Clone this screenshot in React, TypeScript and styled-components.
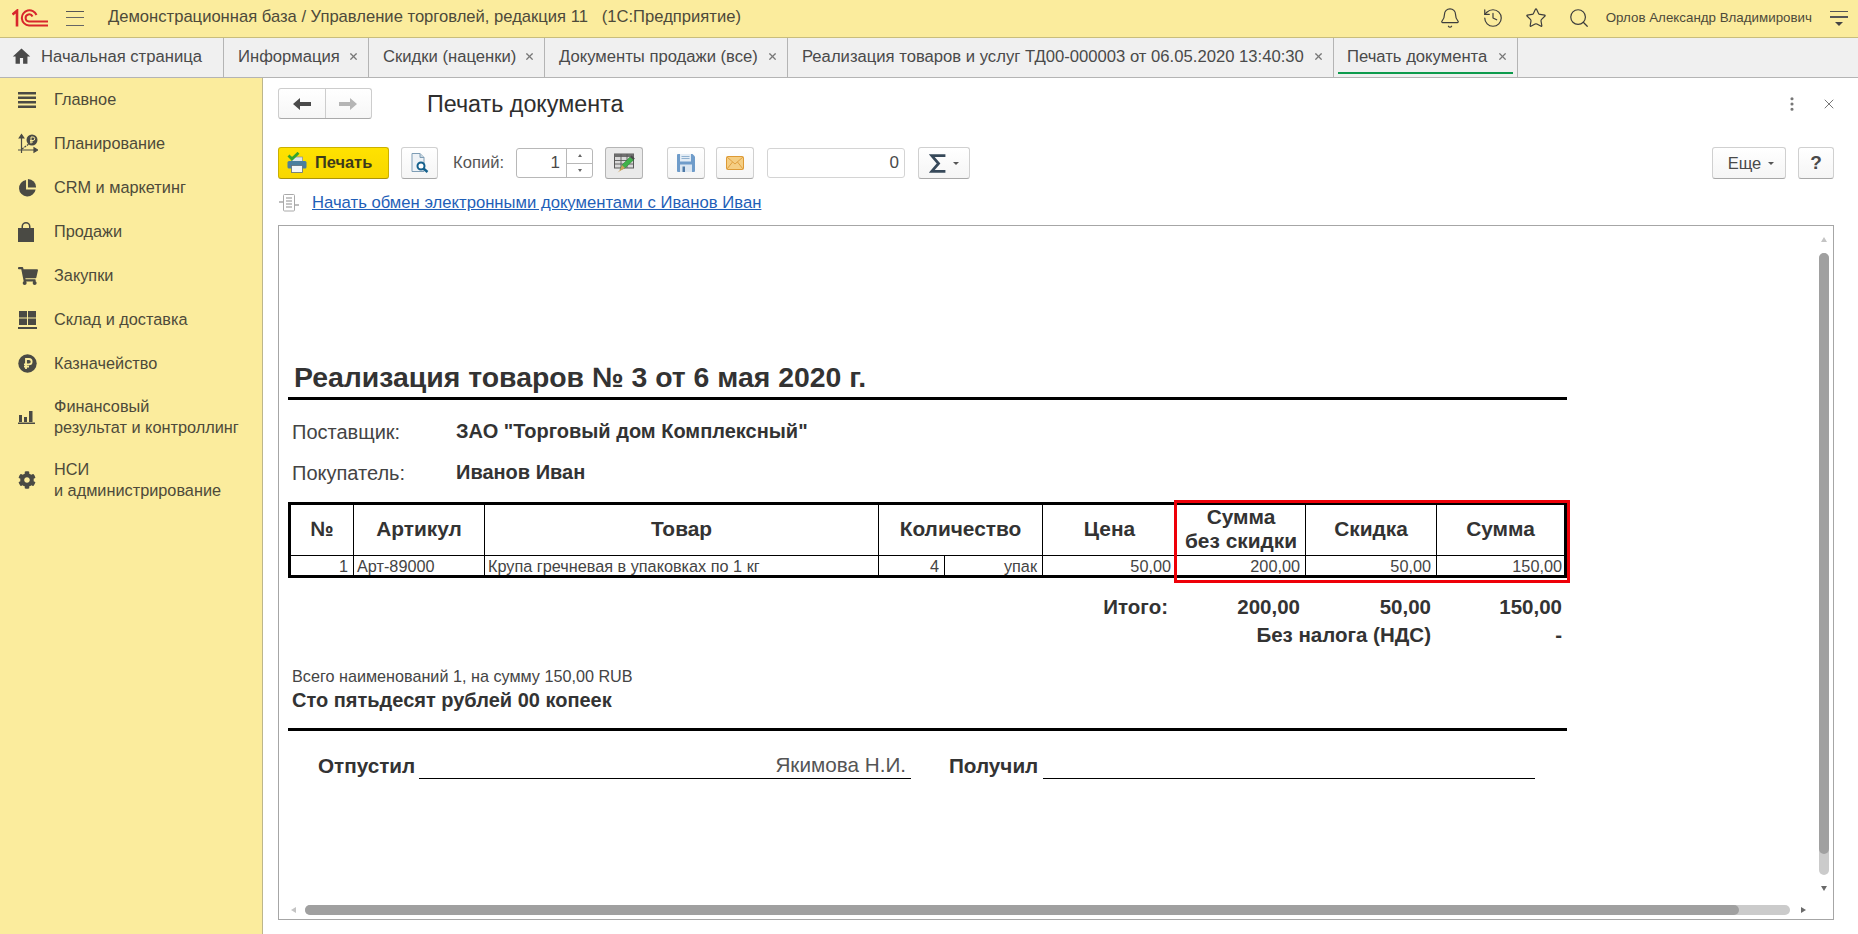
import React from 'react';
import styled, { createGlobalStyle } from 'styled-components';
import { Bell, History, Star, Search, X, MoreVertical } from 'lucide-react';
import { FaCog, FaShoppingCart } from 'react-icons/fa';

const GlobalStyle = createGlobalStyle`
  html, body {
    margin: 0;
    padding: 0;
    background: #fff;
  }
  body {
    font-family: "Liberation Sans", Arial, sans-serif;
    color: #4a4a4a;
  }
  * {
    box-sizing: border-box;
  }
`;

const Page = styled.div`
  width: 1858px;
  height: 934px;
  display: flex;
  flex-direction: column;
  overflow: hidden;
`;

const TopBar = styled.header`
  height: 38px;
  flex: none;
  display: flex;
  align-items: center;
  padding: 0 10px 1px 12px;
  background: #fbec9d;
  border-bottom: 1px solid #c9bd7c;
`;

const Burger = styled.div`
  width: 18px;
  height: 15px;
  margin-left: 18px;
  border-top: 1.5px solid #555;
  border-bottom: 1.5px solid #666;
  position: relative;

  &::after {
    content: '';
    position: absolute;
    left: 0;
    right: 0;
    top: 5px;
    height: 1.5px;
    background: #666;
  }
`;

const AppTitle = styled.div`
  margin-left: 24px;
  padding-bottom: 2px;
  font-size: 16.6px;
  white-space: pre;
  color: #4d4a3a;
`;

const TopActions = styled.div`
  margin-left: auto;
  display: flex;
  align-items: center;
  gap: 21px;
  color: #3d3d3d;
`;

const UserName = styled.div`
  margin-left: 16px;
  padding-bottom: 2px;
  font-size: 13.35px;
  color: #4d4a3a;
`;

const UserMenu = styled.div`
  width: 18px;
  margin-left: 18px;
  display: flex;
  flex-direction: column;
  align-items: stretch;
  gap: 4px;

  i {
    display: block;
    height: 1.5px;
    background: #555;
  }
  b {
    display: block;
    width: 0;
    height: 0;
    align-self: center;
    border-left: 4px solid transparent;
    border-right: 4px solid transparent;
    border-top: 4px solid #444;
  }
`;

const TabBar = styled.nav`
  height: 40px;
  flex: none;
  display: flex;
  background: #f0f0f0;
  border-bottom: 1px solid #b4b4b4;
`;

const Tab = styled.div<{ $width: number; $active?: boolean }>`
  width: ${p => p.$width}px;
  flex: none;
  position: relative;
  display: flex;
  align-items: center;
  justify-content: space-between;
  padding: 0 9px 2px ${p => (p.$active ? 13 : 14)}px;
  border-right: 1px solid #b4b4b4;
  font-size: 16.65px;
  color: #4a4a4a;
  white-space: nowrap;

  ${p => p.$active && `
    &::after {
      content: '';
      position: absolute;
      left: 4px;
      right: 4px;
      bottom: 3px;
      height: 2px;
      background: #0d9b4d;
    }
  `}
`;

const HomeTabLabel = styled.span`
  display: flex;
  align-items: center;
  gap: 10px;
  margin-left: -2px;
`;

const Body = styled.div`
  flex: 1;
  display: flex;
  min-height: 0;
`;

const Sidebar = styled.aside`
  width: 263px;
  flex: none;
  background: #fbec9d;
  border-right: 1px solid #bdb68c;
`;

const SideItem = styled.div<{ $tall?: boolean }>`
  height: ${p => (p.$tall ? 63 : 44)}px;
  display: flex;
  align-items: center;
  padding: 0 0 1px 18px;
  font-size: 16.3px;
  line-height: 21px;
  color: #4d4a3a;
`;

const SideIcon = styled.span`
  width: 36px;
  flex: none;
  display: flex;
  color: #4a4a44;
`;

const Main = styled.main`
  flex: 1;
  min-width: 0;
  display: flex;
  flex-direction: column;
  padding: 10px 24px 14px 15px;
`;

const FormHeader = styled.div`
  height: 31px;
  flex: none;
  display: flex;
  align-items: center;
`;

const NavGroup = styled.div`
  width: 94px;
  height: 31px;
  display: flex;
  background: linear-gradient(#fff, #f6f6f6);
  border: 1px solid #cdcdcd;
  border-bottom-color: #aaa;
  border-radius: 3px;
`;

const NavPart = styled.div<{ $color: string; $divider?: boolean }>`
  flex: 1;
  display: flex;
  align-items: center;
  justify-content: center;
  color: ${p => p.$color};
  ${p => p.$divider && 'border-right: 1px solid #cdcdcd;'}
`;

const FormTitle = styled.h1`
  margin: 1px 0 0 55px;
  font-size: 23.3px;
  font-weight: 400;
  color: #2e2e2e;
`;

const FormActions = styled.div`
  margin-left: auto;
  margin-right: -3px;
  display: flex;
  align-items: center;
  gap: 20px;
  color: #777;
`;

const ToolBar = styled.div`
  height: 32px;
  margin-top: 28px;
  flex: none;
  display: flex;
  align-items: center;
`;

const ToolButton = styled.div<{ $width: number; $gap?: number; $pressed?: boolean }>`
  width: ${p => p.$width}px;
  height: 32px;
  flex: none;
  margin-left: ${p => p.$gap ?? 0}px;
  display: flex;
  align-items: center;
  justify-content: center;
  gap: 7px;
  font-size: 16.5px;
  color: #4a4a4a;
  border-radius: 3px;
  border: 1px solid ${p => (p.$pressed ? '#b5b5b5' : '#d0d0d0')};
  border-bottom-color: ${p => (p.$pressed ? '#a5a5a5' : '#a8a8a8')};
  background: ${p => (p.$pressed ? '#eaeaea' : 'linear-gradient(#fff, #f5f5f5)')};
`;

const MoreButton = styled(ToolButton)`
  padding-left: 4px;
`;

const HelpMark = styled.b`
  font-size: 19px;
`;

const PrintButton = styled.div`
  width: 111px;
  height: 32px;
  flex: none;
  display: flex;
  align-items: center;
  gap: 8px;
  padding: 0 0 1px 8px;
  font-size: 16.4px;
  font-weight: 700;
  color: #3c3a1c;
  border-radius: 3px;
  border: 1px solid #cbb000;
  border-bottom-color: #a9930a;
  background: linear-gradient(#ffe200, #f8d700);
`;

const ToolLabel = styled.span`
  margin-left: 15px;
  padding-bottom: 1px;
  font-size: 16.6px;
  color: #555;
`;

const NumberBox = styled.div<{ $width: number; $gap: number; $spin?: boolean }>`
  width: ${p => p.$width}px;
  height: 30px;
  flex: none;
  margin-left: ${p => p.$gap}px;
  display: flex;
  justify-content: flex-end;
  align-items: center;
  font-size: 17px;
  color: #4a4a4a;
  background: #fff;
  border: 1px solid ${p => (p.$spin ? '#b8b8b8' : '#d4d4d4')};
  border-radius: 3px;
  padding-right: ${p => (p.$spin ? 0 : 5)}px;
`;

const Spinner = styled.div`
  width: 26px;
  height: 100%;
  margin-left: 6px;
  display: flex;
  flex-direction: column;
  border-left: 1px solid #b8b8b8;
`;

const SpinPart = styled.div<{ $down?: boolean }>`
  flex: 1;
  display: flex;
  align-items: center;
  justify-content: center;
  ${p => p.$down && 'border-top: 1px solid #b8b8b8;'}

  &::after {
    content: '';
    width: 0;
    height: 0;
    border-left: 2.5px solid transparent;
    border-right: 2.5px solid transparent;
    ${p => (p.$down ? 'border-top: 3px solid #666;' : 'border-bottom: 3px solid #666;')}
  }
`;

const Caret = styled.span`
  width: 0;
  height: 0;
  border-left: 3px solid transparent;
  border-right: 3px solid transparent;
  border-top: 3px solid #555;
`;

const PushRight = styled.div`
  margin-left: auto;
`;

const LinkRow = styled.div`
  height: 20px;
  margin-top: 14px;
  flex: none;
  display: flex;
  align-items: center;
  gap: 13px;
  padding: 0 0 1px 1px;
`;

const DocLink = styled.a`
  font-size: 16.67px;
  color: #1f5fb8;
  text-decoration: underline;
`;

const Frame = styled.section`
  flex: 1;
  margin-top: 12px;
  position: relative;
  overflow: hidden;
  border: 1px solid #a6a6a6;
  padding: 130px 0 0 9px;
`;

const Doc = styled.div`
  width: 1279px;
  color: #333;
`;

const DocTitle = styled.h2`
  margin: 0;
  height: 44px;
  padding: 2px 0 0 6px;
  font-size: 28.4px;
  line-height: 38px;
  font-weight: 700;
  white-space: nowrap;
  border-bottom: 3px solid #000;
`;

const PartyRow = styled.div<{ $first?: boolean }>`
  height: 41px;
  margin-top: ${p => (p.$first ? 12 : 0)}px;
  padding-left: 4px;
  display: flex;
  align-items: center;
  font-size: 20px;
`;

const PartyLabel = styled.span`
  width: 164px;
  flex: none;
  color: #444;
`;

const PartyValue = styled.span`
  font-weight: 700;
  position: relative;
  top: -1px;
`;

const TableWrap = styled.div`
  position: relative;
  margin-top: 8px;
`;

const PrintTable = styled.table`
  width: 1279px;
  table-layout: fixed;
  border-collapse: separate;
  border-spacing: 0;
  border: 3px solid #000;
`;

const Th = styled.th<{ $last?: boolean }>`
  height: 51px;
  padding: 0 0 2px;
  font-size: 20.9px;
  line-height: 24px;
  font-weight: 700;
  text-align: center;
  color: #333;
  white-space: nowrap;
  border-bottom: 1px solid #000;
  ${p => !p.$last && 'border-right: 1px solid #000;'}
`;

const Td = styled.td<{ $last?: boolean; $left?: boolean }>`
  height: 19px;
  padding: 1px ${p => (p.$last ? 2 : 5)}px 0 3px;
  font-size: 16.25px;
  line-height: 18px;
  color: #444;
  text-align: ${p => (p.$left ? 'left' : 'right')};
  white-space: nowrap;
  ${p => !p.$last && 'border-right: 1px solid #000;'}
`;

const Highlight = styled.div`
  position: absolute;
  left: 886px;
  top: -2px;
  width: 396px;
  height: 83px;
  border: 3px solid #ee0008;
  pointer-events: none;
`;

const Totals = styled.div`
  margin-top: 15px;
  display: grid;
  width: 1274px;
  grid-template-columns: 880px 132px 131px 131px;
  grid-auto-rows: 28px;
  align-items: center;
  text-align: right;
  font-size: 20.5px;
  font-weight: 700;
`;

const TotalWide = styled.div`
  grid-column: 1 / 4;
`;

const SumCount = styled.div`
  margin-top: 16px;
  padding-left: 4px;
  font-size: 16.2px;
  line-height: 23px;
  color: #444;
`;

const SumWords = styled.div`
  padding-left: 4px;
  font-size: 20px;
  line-height: 24px;
  font-weight: 700;
`;

const Rule = styled.div`
  height: 3px;
  margin-top: 16px;
  background: #000;
`;

const Signatures = styled.div`
  margin-top: 21px;
  padding-left: 30px;
  display: flex;
  align-items: flex-end;
  font-size: 20.7px;
`;

const SignLabel = styled.span<{ $width: number; $gap?: number }>`
  width: ${p => p.$width}px;
  margin-left: ${p => p.$gap ?? 0}px;
  height: 26px;
  line-height: 26px;
  font-weight: 700;
  white-space: nowrap;
`;

const SignLine = styled.span`
  width: 492px;
  height: 27px;
  line-height: 26px;
  padding-right: 5px;
  text-align: right;
  color: #555;
  border-bottom: 1px solid #000;
`;

const VTrack = styled.div`
  position: absolute;
  right: 4px;
  top: 27px;
  bottom: 44px;
  width: 10px;
  border-radius: 5px;
  background: #cbcbcb;

  &::after {
    content: '';
    position: absolute;
    left: 0;
    right: 0;
    top: 0;
    bottom: 21px;
    border-radius: 5px;
    background: #a0a0a0;
  }
`;

const HTrack = styled.div`
  position: absolute;
  left: 26px;
  bottom: 4px;
  width: 1485px;
  height: 10px;
  border-radius: 5px;
  background: #cbcbcb;

  &::after {
    content: '';
    position: absolute;
    left: 0;
    top: 0;
    bottom: 0;
    width: 1434px;
    border-radius: 5px;
    background: #a0a0a0;
  }
`;

const Arrow = styled.span<{ $dir: 'up' | 'down' | 'left' | 'right'; $x: number; $y: number; $color: string }>`
  position: absolute;
  left: ${p => p.$x}px;
  top: ${p => p.$y}px;
  width: 0;
  height: 0;
  ${p => {
    const side = '3.5px solid transparent';
    const solid = `5px solid ${p.$color}`;
    if (p.$dir === 'up') return `border-left: ${side}; border-right: ${side}; border-bottom: ${solid};`;
    if (p.$dir === 'down') return `border-left: ${side}; border-right: ${side}; border-top: ${solid};`;
    if (p.$dir === 'left') return `border-top: ${side}; border-bottom: ${side}; border-right: ${solid};`;
    return `border-top: ${side}; border-bottom: ${side}; border-left: ${solid};`;
  }}
`;

const Logo = () => (
  <svg width="36" height="18" viewBox="0 0 36 18" fill="none" stroke="#d8262c" strokeWidth="2">
    <path d="M0.5 5.5 L5 1.8 V17.5" strokeWidth="2.6" />
    <path d="M24.5 6 A7.6 7.6 0 1 0 17 16.5 H36" />
    <path d="M20.5 7.5 A3.6 3.6 0 1 0 17 12.5 H36" />
  </svg>
);

const Home = () => (
  <svg width="19" height="19" viewBox="0 0 24 24" fill="#4a4a4a">
    <path d="M10 21v-7h4v7h5.5v-9H23L12 2 1 12h3.5v9z" />
  </svg>
);

const ArrowLeft = () => (
  <svg width="18" height="12" viewBox="0 0 18 12" fill="currentColor">
    <path d="M0 6 L7 0 V4 H18 V8 H7 V12 Z" />
  </svg>
);

const ArrowRight = () => (
  <svg width="18" height="12" viewBox="0 0 18 12" fill="currentColor">
    <path d="M18 6 L11 0 V4 H0 V8 H11 V12 Z" />
  </svg>
);

const IconMain = () => (
  <svg width="18" height="16" viewBox="0 0 18 16" fill="currentColor">
    <rect y="0" width="18" height="2.5" />
    <rect y="4.5" width="18" height="2.5" />
    <rect y="9" width="18" height="2.5" />
    <rect y="13.5" width="18" height="2.5" />
  </svg>
);

const IconPlanning = () => (
  <svg width="20" height="21" viewBox="0 0 20 21" fill="none" stroke="currentColor" strokeWidth="1.2">
    <path d="M3.5 3 V20 M0 17 H18" />
    <path d="M1.2 5 L3.5 1.5 L5.8 5 Z M16 14.8 L19.5 17 L16 19.2 Z" fill="currentColor" />
    <path d="M4 16 L11 11" strokeDasharray="2 1" />
    <circle cx="14" cy="7" r="5.5" fill="currentColor" stroke="none" />
    <path d="M13 10.5 V4 H15 A1.6 1.6 0 0 1 15 7.5 H12 M12 9 H15" stroke="#fbec9d" strokeWidth="1" />
  </svg>
);

const IconPie = () => (
  <svg width="18" height="18" viewBox="0 0 19 19" fill="currentColor">
    <path d="M8.5 1 A8.8 8.8 0 1 0 18.6 11 H8.5 Z" />
    <path d="M10.5 0 A8.6 8.6 0 0 1 19 9 H10.5 Z" />
  </svg>
);

const IconBag = () => (
  <svg width="16" height="20" viewBox="0 0 16 20" fill="currentColor">
    <path
      d="M0 6 H3.5 V4.5 A4.5 4.5 0 0 1 12.5 4.5 V6 H16 V20 H0 Z M5 6 H11 V4.5 A3 3 0 0 0 5 4.5 Z"
      fillRule="evenodd"
    />
  </svg>
);

const IconStock = () => (
  <svg width="19" height="18" viewBox="0 0 19 18" fill="currentColor">
    <rect x="1" y="0" width="8" height="6.5" />
    <rect x="10" y="0" width="8" height="6.5" />
    <rect x="1" y="7.5" width="8" height="6.5" />
    <rect x="10" y="7.5" width="8" height="6.5" />
    <rect x="0" y="16" width="19" height="2" />
  </svg>
);

const IconRuble = () => (
  <svg width="19" height="19" viewBox="0 0 19 19">
    <circle cx="9.5" cy="9.5" r="9.2" fill="currentColor" />
    <path d="M8 15 V5 H11 A2.6 2.6 0 0 1 11 10.3 H6 M6 12.6 H11" fill="none" stroke="#fbec9d" strokeWidth="1.8" />
  </svg>
);

const IconBars = () => (
  <svg width="17" height="14" viewBox="0 0 17 14" fill="currentColor">
    <rect x="1" y="5" width="3" height="7" />
    <rect x="6" y="7" width="3" height="5" />
    <rect x="11" y="1" width="3.5" height="11" />
    <rect x="0" y="12.5" width="17" height="1.5" />
  </svg>
);

const IconPrinter = () => (
  <svg width="20" height="21" viewBox="0 0 20 21">
    <rect x="4.5" y="5" width="11" height="6" fill="#dfe6ec" stroke="#7c8b99" strokeWidth=".7" />
    <rect x="0.5" y="9" width="19" height="7.5" rx="1.5" fill="#4b7f9e" />
    <rect x="4.5" y="13.5" width="11" height="7" fill="#f3f6f8" stroke="#5c6e7c" strokeWidth=".8" />
    <path d="M1.5 3.5 L5 7 L11.5 .8" fill="none" stroke="#35a52b" strokeWidth="2.8" />
  </svg>
);

const IconPreview = () => (
  <svg width="18" height="20" viewBox="0 0 18 20">
    <path d="M1 .5 H9 L13 4.5 V18.5 H1 Z" fill="#eef2f6" stroke="#7e9db5" />
    <path d="M9 .5 V4.5 H13" fill="#c9d6e0" stroke="#7e9db5" />
    <circle cx="10" cy="13" r="3.5" fill="#fff" stroke="#14608c" strokeWidth="2" />
    <path d="M12.5 15.5 L16.5 19" stroke="#14608c" strokeWidth="2.4" />
  </svg>
);

const IconTableEdit = () => (
  <svg width="21" height="20" viewBox="0 0 21 20">
    <rect x=".5" y="1" width="19" height="14" fill="#d8d8d8" stroke="#5a5a5a" />
    <rect x=".5" y="1" width="19" height="3" fill="#6e6e6e" />
    <path d="M.5 7.5 H19.5 M.5 11 H19.5 M7 1 V15 M13 1 V15" stroke="#5a5a5a" strokeWidth=".9" />
    <path d="M6 17 L8 12 L16 4 L19.5 7 L11 15 Z" fill="#3fb24a" stroke="#2c7a33" strokeWidth=".5" />
    <path d="M8 12 L6 17 L3.5 19.5 L11 15 Z" fill="#cfa15d" />
    <path d="M16 4 L17.6 2.4 L20.8 5.6 L19.5 7 Z" fill="#4a4a4a" />
  </svg>
);

const IconSave = () => (
  <svg width="18" height="18" viewBox="0 0 18 18">
    <path d="M0 1 A1 1 0 0 1 1 0 H15.5 L18 2.5 V17 A1 1 0 0 1 17 18 H1 A1 1 0 0 1 0 17 Z" fill="#6f9cca" />
    <rect x="3" y="0" width="11" height="7.5" fill="#e3ecf5" />
    <path d="M4.5 2.5 H12.5 M4.5 4.5 H12.5" stroke="#8fb0cf" />
    <rect x="3" y="10.5" width="12" height="7.5" fill="#dbe6f1" />
    <rect x="5.5" y="12.5" width="2.5" height="5.5" fill="#4e7aa8" />
  </svg>
);

const IconMail = () => (
  <svg width="18" height="14" viewBox="0 0 18 14">
    <rect x=".5" y=".5" width="17" height="13" rx="1" fill="#f5ce83" stroke="#dd9a35" />
    <path d="M1 1 L9 8 L17 1 M1 13 L6.5 6 M17 13 L11.5 6" fill="none" stroke="#e0a040" />
  </svg>
);

const IconSigma = () => (
  <svg width="17" height="19" viewBox="0 0 16 18" fill="none" stroke="#37495a" strokeWidth="2.6">
    <path d="M15.5 1.5 H2.5 L9 9 L2.5 16.5 H15.5" />
  </svg>
);

const IconExchange = () => (
  <svg width="20" height="18" viewBox="0 0 20 18" fill="none" stroke="#a9a9a9">
    <rect x="4.5" y=".5" width="11" height="16.5" rx="1" fill="#fff" />
    <path d="M7 4 H13 M7 7 H13 M7 10 H13 M7 13 H13" stroke="#8d8d8d" />
    <path d="M0 8 H4 M16 11 H20" strokeWidth="1.6" />
  </svg>
);

const columnWidths = [63, 131, 394, 66, 98, 134, 129, 131, 127];

const sideItems: { key: string; icon: React.ReactNode; lines: string[] }[] = [
  { key: 'main', icon: <IconMain />, lines: ['Главное'] },
  { key: 'plan', icon: <IconPlanning />, lines: ['Планирование'] },
  { key: 'crm', icon: <IconPie />, lines: ['CRM и маркетинг'] },
  { key: 'sale', icon: <IconBag />, lines: ['Продажи'] },
  { key: 'buy', icon: <FaShoppingCart size={20} />, lines: ['Закупки'] },
  { key: 'stock', icon: <IconStock />, lines: ['Склад и доставка'] },
  { key: 'cash', icon: <IconRuble />, lines: ['Казначейство'] },
  { key: 'fin', icon: <IconBars />, lines: ['Финансовый', 'результат и контроллинг'] },
  { key: 'nsi', icon: <FaCog size={18} />, lines: ['НСИ', 'и администрирование'] },
];

const tabs = [
  { title: 'Информация', width: 145 },
  { title: 'Скидки (наценки)', width: 176 },
  { title: 'Документы продажи (все)', width: 243 },
  { title: 'Реализация товаров и услуг ТД00-000003 от 06.05.2020 13:40:30', width: 546 },
  { title: 'Печать документа', width: 184, active: true },
];

const App = () => (
  <Page>
    <GlobalStyle />
    <TopBar>
      <Logo />
      <Burger />
      <AppTitle>Демонстрационная база / Управление торговлей, редакция 11   (1С:Предприятие)</AppTitle>
      <TopActions>
        <Bell size={22} strokeWidth={1.3} />
        <History size={22} strokeWidth={1.3} />
        <Star size={22} strokeWidth={1.3} />
        <Search size={22} strokeWidth={1.3} />
      </TopActions>
      <UserName>Орлов Александр Владимирович</UserName>
      <UserMenu>
        <i />
        <i />
        <b />
      </UserMenu>
    </TopBar>

    <TabBar>
      <Tab $width={224}>
        <HomeTabLabel>
          <Home />
          Начальная страница
        </HomeTabLabel>
      </Tab>
      {tabs.map(tab => (
        <Tab key={tab.title} $width={tab.width} $active={tab.active}>
          {tab.title}
          <X size={11} strokeWidth={2.6} color="#777" />
        </Tab>
      ))}
    </TabBar>

    <Body>
      <Sidebar>
        {sideItems.map(item => (
          <SideItem key={item.key} $tall={item.lines.length > 1}>
            <SideIcon>{item.icon}</SideIcon>
            <div>
              {item.lines.map(line => (
                <div key={line}>{line}</div>
              ))}
            </div>
          </SideItem>
        ))}
      </Sidebar>

      <Main>
        <FormHeader>
          <NavGroup>
            <NavPart $color="#4a4a4a" $divider>
              <ArrowLeft />
            </NavPart>
            <NavPart $color="#b5b5b5">
              <ArrowRight />
            </NavPart>
          </NavGroup>
          <FormTitle>Печать документа</FormTitle>
          <FormActions>
            <MoreVertical size={18} strokeWidth={2.2} />
            <X size={16} strokeWidth={1.5} />
          </FormActions>
        </FormHeader>

        <ToolBar>
          <PrintButton>
            <IconPrinter />
            Печать
          </PrintButton>
          <ToolButton $width={37} $gap={12}>
            <IconPreview />
          </ToolButton>
          <ToolLabel>Копий:</ToolLabel>
          <NumberBox $width={77} $gap={12} $spin>
            1
            <Spinner>
              <SpinPart />
              <SpinPart $down />
            </Spinner>
          </NumberBox>
          <ToolButton $width={38} $gap={12} $pressed>
            <IconTableEdit />
          </ToolButton>
          <ToolButton $width={38} $gap={24}>
            <IconSave />
          </ToolButton>
          <ToolButton $width={38} $gap={11}>
            <IconMail />
          </ToolButton>
          <NumberBox $width={138} $gap={13}>
            0
          </NumberBox>
          <ToolButton $width={52} $gap={13}>
            <IconSigma />
            <Caret />
          </ToolButton>
          <PushRight />
          <MoreButton $width={74}>
            Еще
            <Caret />
          </MoreButton>
          <ToolButton $width={36} $gap={12}>
            <HelpMark>?</HelpMark>
          </ToolButton>
        </ToolBar>

        <LinkRow>
          <IconExchange />
          <DocLink>Начать обмен электронными документами с Иванов Иван</DocLink>
        </LinkRow>

        <Frame>
          <Doc>
            <DocTitle>Реализация товаров № 3 от 6 мая 2020 г.</DocTitle>
            <PartyRow $first>
              <PartyLabel>Поставщик:</PartyLabel>
              <PartyValue>ЗАО "Торговый дом Комплексный"</PartyValue>
            </PartyRow>
            <PartyRow>
              <PartyLabel>Покупатель:</PartyLabel>
              <PartyValue>Иванов Иван</PartyValue>
            </PartyRow>

            <TableWrap>
              <PrintTable>
                <colgroup>
                  {columnWidths.map((w, i) => (
                    <col key={i} style={{ width: w }} />
                  ))}
                </colgroup>
                <thead>
                  <tr>
                    <Th>№</Th>
                    <Th>Артикул</Th>
                    <Th>Товар</Th>
                    <Th colSpan={2}>Количество</Th>
                    <Th>Цена</Th>
                    <Th>
                      Сумма
                      <br />
                      без скидки
                    </Th>
                    <Th>Скидка</Th>
                    <Th $last>Сумма</Th>
                  </tr>
                </thead>
                <tbody>
                  <tr>
                    <Td>1</Td>
                    <Td $left>Арт-89000</Td>
                    <Td $left>Крупа гречневая в упаковках по 1 кг</Td>
                    <Td>4</Td>
                    <Td>упак</Td>
                    <Td>50,00</Td>
                    <Td>200,00</Td>
                    <Td>50,00</Td>
                    <Td $last>150,00</Td>
                  </tr>
                </tbody>
              </PrintTable>
              <Highlight />
            </TableWrap>

            <Totals>
              <div>Итого:</div>
              <div>200,00</div>
              <div>50,00</div>
              <div>150,00</div>
              <TotalWide>Без налога (НДС)</TotalWide>
              <div>-</div>
            </Totals>

            <SumCount>Всего наименований 1, на сумму 150,00 RUB</SumCount>
            <SumWords>Сто пятьдесят рублей 00 копеек</SumWords>
            <Rule />

            <Signatures>
              <SignLabel $width={101}>Отпустил</SignLabel>
              <SignLine>Якимова Н.И.</SignLine>
              <SignLabel $width={94} $gap={38}>
                Получил
              </SignLabel>
              <SignLine />
            </Signatures>
          </Doc>

          <Arrow $dir="up" $x={1542} $y={11} $color="#c4c4c4" />
          <VTrack />
          <Arrow $dir="down" $x={1542} $y={660} $color="#6a6a6a" />
          <Arrow $dir="left" $x={12} $y={681} $color="#c4c4c4" />
          <HTrack />
          <Arrow $dir="right" $x={1522} $y={681} $color="#6a6a6a" />
        </Frame>
      </Main>
    </Body>
  </Page>
);

export default App;
